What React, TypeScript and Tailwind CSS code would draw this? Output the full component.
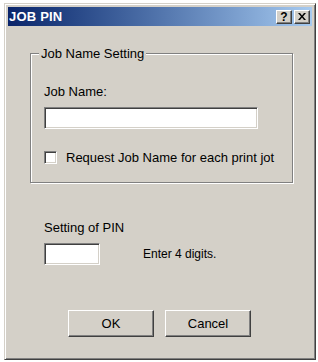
import React from "react";

const font = { fontFamily: '"Liberation Sans", Arial, sans-serif' };

function Sunken({ className }: { className: string }) {
  return (
    <div
      className={`bg-white border border-t-[#808080] border-l-[#808080] border-r-white border-b-white shadow-[inset_1px_1px_0_#404040,inset_-1px_-1px_0_#d4d0c8] ${className}`}
    />
  );
}

function Button({ children }: { children: React.ReactNode }) {
  return (
    <div className="w-[86px] h-[27px] flex items-center justify-center bg-[#d4d0c8] border border-t-white border-l-white border-r-[#404040] border-b-[#404040] shadow-[inset_-1px_-1px_0_#808080,inset_1px_1px_0_#d4d0c8] text-[13px] text-black">
      {children}
    </div>
  );
}

function TitleBtn({ children }: { children: React.ReactNode }) {
  return (
    <div className="w-[16px] h-[14px] flex items-center justify-center bg-[#d4d0c8] border border-t-white border-l-white border-r-[#404040] border-b-[#404040] shadow-[inset_-1px_-1px_0_#808080] text-[12px] font-bold leading-none text-black">
      {children}
    </div>
  );
}

export default function App() {
  return (
    <div className="w-[318px] h-[362px] bg-white pt-[3px] pl-[4px]" style={font}>
      <div className="w-[312px] h-[357px] bg-[#d4d0c8] border border-t-[#d4d0c8] border-l-[#d4d0c8] border-r-[#404040] border-b-[#404040] shadow-[inset_1px_1px_0_#fff,inset_-1px_-1px_0_#808080] p-[3px] flex flex-col">
        <div className="h-[19px] flex items-center justify-between bg-gradient-to-r from-[#0a246a] to-[#a6caf0] pl-[1px] pr-[2px]">
          <span className="text-white font-bold text-[13px] tracking-[0.2px]">JOB PIN</span>
          <div className="flex gap-[2px]">
            <TitleBtn>?</TitleBtn>
            <TitleBtn>
              <svg width="8" height="7" viewBox="0 0 8 7">
                <path d="M0 0h2l2 2.5L6 0h2L5 3.5 8 7H6L4 4.5 2 7H0l3-3.5z" fill="#000" />
              </svg>
            </TitleBtn>
          </div>
        </div>

        <div className="ml-[22px] mt-[27px] w-[263px] h-[130px] relative border border-[#808080] shadow-[1px_1px_0_#fff,inset_1px_1px_0_#fff] pl-[13px] pt-[30px]">
          <span className="absolute left-[8px] top-[-8px] bg-[#d4d0c8] px-[2px] text-[13px] leading-[15px] text-black">
            Job Name Setting
          </span>
          <div className="text-[13px] leading-[15px] text-black">Job Name:</div>
          <Sunken className="mt-[8px] w-[214px] h-[22px]" />
          <div className="mt-[21px] flex items-center gap-[9px] whitespace-nowrap overflow-hidden w-[240px]">
            <Sunken className="w-[13px] h-[13px] shrink-0" />
            <span className="text-[13px] leading-[15px] text-black">
              Request Job Name for each print jot
            </span>
          </div>
        </div>

        <div className="ml-[36px] mt-[37px] text-[13px] leading-[15px] text-black">Setting of PIN</div>
        <div className="ml-[36px] mt-[8px] flex items-center">
          <Sunken className="w-[56px] h-[22px]" />
          <span className="ml-[43px] text-[12px] text-black">Enter 4 digits.</span>
        </div>

        <div className="ml-[60px] mt-[45px] flex gap-[11px]">
          <Button>OK</Button>
          <Button>Cancel</Button>
        </div>
      </div>
    </div>
  );
}
